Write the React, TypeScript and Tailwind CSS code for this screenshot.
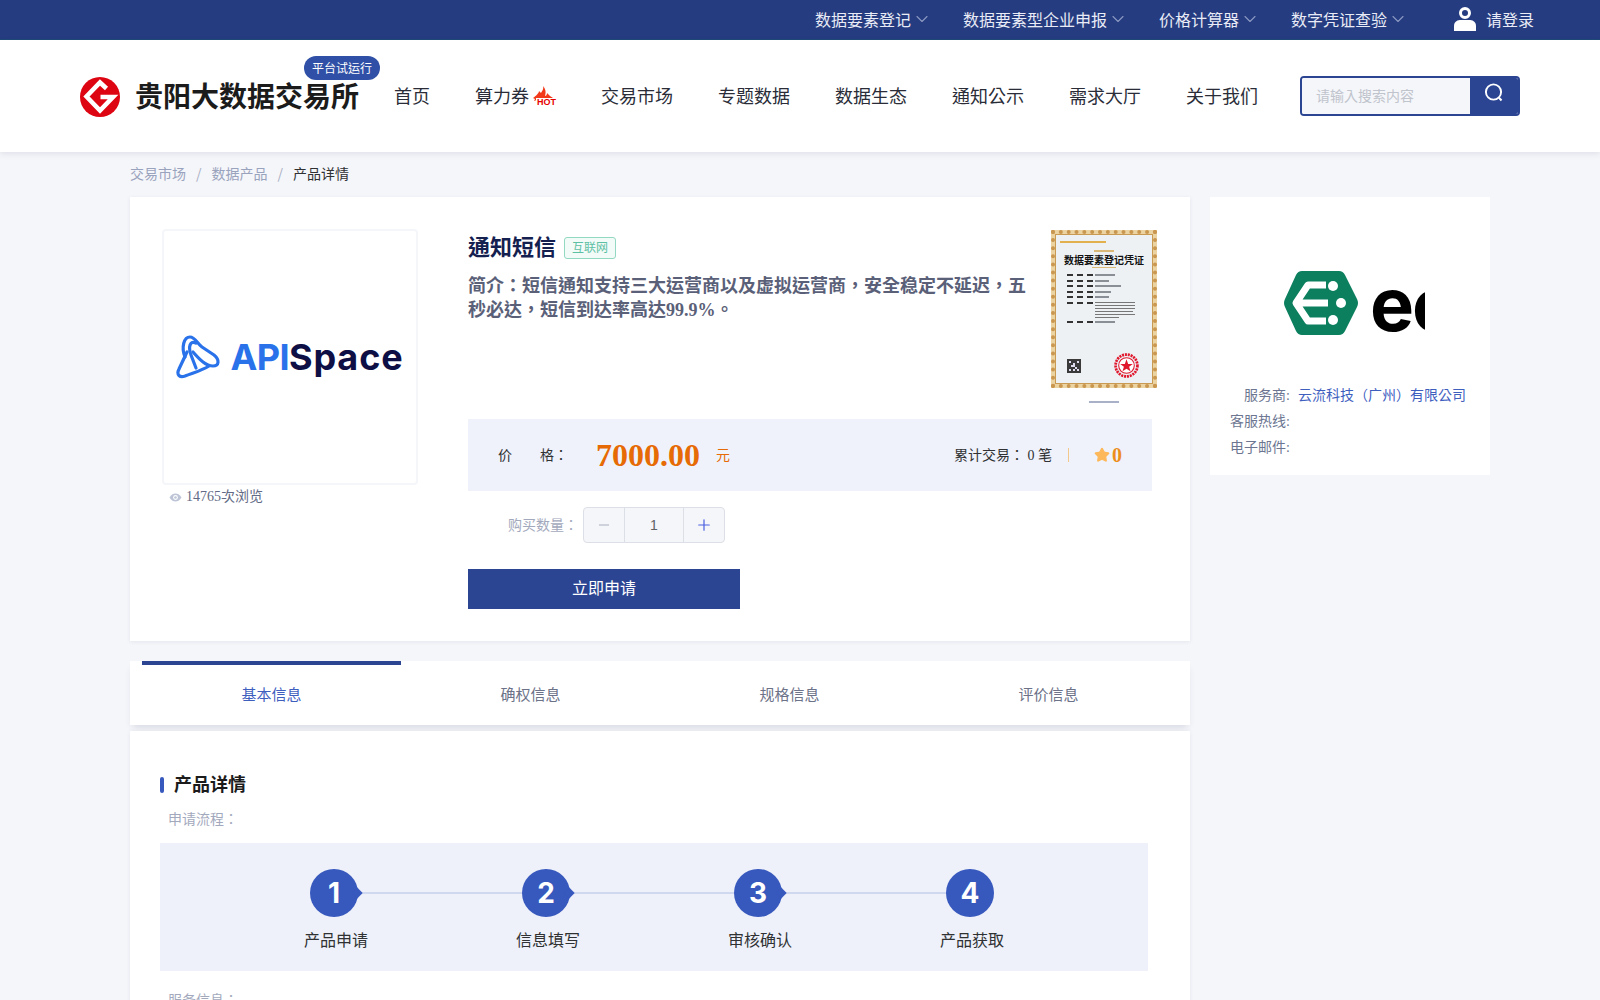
import React from "react";
import { ChevronDown, Star, Minus, Plus } from "lucide-react";

const topLinks = ["数据要素登记", "数据要素型企业申报", "价格计算器", "数字凭证查验"];
const navLinks = ["首页", "算力券", "交易市场", "专题数据", "数据生态", "通知公示", "需求大厅", "关于我们"];
const tabs = ["基本信息", "确权信息", "规格信息", "评价信息"];
const steps = ["产品申请", "信息填写", "审核确认", "产品获取"];

function Logo() {
  return (
    <svg width="40" height="40" viewBox="0 0 40 40" className="shrink-0 translate-y-[2px]">
      <circle cx="20" cy="20" r="20" fill="#de0512" />
      <path d="M26.5 11.5 L20 5.5 L6.5 19.5 L20 33.5 L33 20 L20.5 20" fill="none" stroke="#fff" strokeWidth="4.6" />
    </svg>
  );
}

function HotIcon() {
  return (
    <span className="relative ml-[3px] inline-block h-[24px] w-[24px] shrink-0">
      <svg width="24" height="24" viewBox="0 0 24 24" className="absolute left-0 top-0">
        <path d="M11 3 C12 6 10 8 9 10 L7 8 C7 10 4 13 1 15 L3 16 L2 18 L5 17 L21 15 C19 14 17 12 15 10 C15 12 14 13 13 13 C14 10 14 6 11 3 Z" fill="#f2391a" />
      </svg>
      <span className="absolute left-[4px] top-[15px] h-[9px] bg-white px-[1px] font-['Liberation_Sans',sans-serif] text-[9px] font-bold leading-[9px] text-[#e60000]">HOT</span>
    </span>
  );
}

function UserIcon() {
  return (
    <svg width="22" height="24" viewBox="0 0 22 24" className="shrink-0">
      <circle cx="11" cy="6" r="4.5" fill="none" stroke="#fff" strokeWidth="3" />
      <path d="M0 24 L0 19 C0 14 4 13 7 13 L15 13 C18 13 22 14 22 19 L22 24 Z" fill="#fff" />
    </svg>
  );
}

function SearchIcon() {
  return (
    <svg width="20" height="20" viewBox="0 0 20 20" className="shrink-0">
      <circle cx="9.5" cy="9" r="7.6" fill="none" stroke="#fff" strokeWidth="1.9" />
      <path d="M15 14.8 L17.5 17.5" fill="none" stroke="#fff" strokeWidth="2" />
    </svg>
  );
}

function EyeIcon() {
  return (
    <svg width="13" height="9" viewBox="0 0 13 9" className="shrink-0">
      <path d="M0.5 4.5 C2.5 1.2 4.5 0.5 6.5 0.5 C8.5 0.5 10.5 1.2 12.5 4.5 C10.5 7.8 8.5 8.5 6.5 8.5 C4.5 8.5 2.5 7.8 0.5 4.5 Z" fill="#bcc4d6" />
      <circle cx="6.5" cy="4.5" r="2.4" fill="#fff" />
      <circle cx="6.5" cy="4.5" r="1.3" fill="#bcc4d6" />
    </svg>
  );
}

function ApiSpaceLogo() {
  return (
    <div className="flex items-center">
      <svg width="46" height="44" viewBox="0 0 46 44" className="shrink-0">
        <g fill="none" stroke="#2a72ea" strokeWidth="3.2" strokeLinecap="round" strokeLinejoin="round">
          <path d="M9 22 C5 12 8 2 14 2 C19 2 21 8 26 12 L38 20 C44 25 43 31 37 31 C30 31 24 25 17 17" />
          <path d="M11 17 L3 34 C0 40 4 43 9 41 C16 38 25 36 33 31" />
          <path d="M20 8 C14 5 12 12 15 20 L20 33" />
        </g>
      </svg>
      <span className="ml-[8px] font-['Inter',sans-serif] text-[36px] font-bold leading-[44px] tracking-[-0.6px] text-[#2a72ea]">API</span>
      <span className="font-['Inter',sans-serif] text-[36px] font-bold leading-[44px] tracking-[0.9px] text-[#0d0f45]">Space</span>
    </div>
  );
}

function GreenLogo() {
  return (
    <div className="ml-[74px] flex h-[80px] w-[141px] items-start overflow-hidden">
      <svg width="74" height="68" viewBox="0 0 74 68" className="mt-[7px] shrink-0">
        <path d="M18 2 L55 2 Q59 2 61 6 L73 30 Q75 34 73 38 L61 62 Q59 66 55 66 L18 66 Q14 66 12 62 L1 38 Q-1 34 1 30 L12 6 Q14 2 18 2 Z" fill="#0b7f5e" />
        <path d="M42 16 L24 16 L12 34 L24 52 L42 52 M12 34 L44 34" fill="none" stroke="#fff" strokeWidth="7" strokeLinejoin="round" />
        <circle cx="49" cy="17" r="5" fill="#fff" />
        <circle cx="57" cy="34" r="5" fill="#fff" />
        <circle cx="49" cy="51" r="5" fill="#fff" />
      </svg>
      <span className="ml-[12px] mt-[2px] font-['Inter',sans-serif] text-[74px] font-bold leading-[80px] tracking-[-2px] text-black">ec</span>
    </div>
  );
}

function Certificate() {
  const rows = [20, 14, 26, 16, 14];
  return (
    <div className="h-[158px] w-[106px] shrink-0 border-[4px] border-dotted border-[#c9974f] bg-[#ecd3a2]">
      <div className="flex h-full flex-col border border-[#c99a52] bg-[#edf1f4] pl-[4px] pr-[4px] pt-[6px]">
        <div className="h-[2px] w-[46px] bg-[#e3b04f]" />
        <div className="mx-auto mt-[7px] h-[2px] w-[20px] bg-[#d9b878]" />
        <div className="mt-[2px] whitespace-nowrap text-center font-['Noto_Sans_CJK_TC',sans-serif] text-[10px] font-bold leading-[12px] text-[#111]">数据要素登记凭证</div>
        <div className="mx-auto mt-[1px] h-[1px] w-[24px] bg-[#d9b878]" />
        <div className="ml-[7px] mt-[6px] flex flex-col gap-[3.5px]">
          {rows.map((w, i) => (
            <div key={i} className="flex gap-[2px]">
              <div className="h-[2px] w-[26px] border-t-2 border-dashed border-[#333]" />
              <div className="h-[2px] bg-[#8a8f95]" style={{ width: w }} />
            </div>
          ))}
          <div className="flex gap-[2px]">
            <div className="h-[2px] w-[26px] border-t-2 border-dashed border-[#333]" />
            <div className="flex flex-col gap-[2px]">
              {[40, 40, 40, 38, 40, 24].map((w, i) => (
                <div key={i} className="h-[1px] bg-[#777]" style={{ width: w }} />
              ))}
            </div>
          </div>
          <div className="flex gap-[2px]">
            <div className="h-[2px] w-[26px] border-t-2 border-dashed border-[#333]" />
            <div className="h-[2px] w-[20px] bg-[#8a8f95]" />
          </div>
        </div>
        <div className="mt-auto flex items-end justify-between pb-[5px] pl-[7px] pr-[9px]">
          <svg width="14" height="15" viewBox="0 0 7 7" shapeRendering="crispEdges" className="mb-[5px] shrink-0">
            <rect width="7" height="7" fill="#3a3a3a" />
            <path d="M1 1h1v1H1zM5 1h1v1H5zM1 5h1v1H1zM3 2h1v1H3zM4 4h1v1H4zM3 3h1v1H3zM5 5h1v1H5zM2 3h1v1H2zM3 5h1v1H3z" fill="#dde" />
          </svg>
          <svg width="25" height="25" viewBox="0 0 24 24" className="shrink-0">
            <circle cx="12" cy="12" r="10.5" fill="none" stroke="#e0182d" strokeWidth="2.6" strokeDasharray="2 0.8" />
            <circle cx="12" cy="12" r="7.5" fill="#fff" stroke="#e0182d" strokeWidth="1" />
            <path d="M12 6 L13.6 10.5 L18 10.5 L14.5 13.2 L15.8 17.5 L12 15 L8.2 17.5 L9.5 13.2 L6 10.5 L10.4 10.5 Z" fill="#e0182d" />
          </svg>
        </div>
      </div>
    </div>
  );
}

export default function App() {
  return (
    <div className="h-screen overflow-hidden bg-[#f5f6fa] font-['Liberation_Serif','Noto_Sans_CJK_TC',serif]">
      <div className="flex h-[40px] items-center border-b border-[#1f4a78] bg-[#263c80] pb-[2px] pr-[66px] font-['Noto_Sans_CJK_TC',sans-serif]">
        <div className="ml-auto flex items-center">
          {topLinks.map((t, i) => (
            <div key={t} className={`flex items-center text-[16px] leading-[24px] text-[#e9ecf6] ${i === 0 ? "" : "ml-[31px]"}`}>
              <span>{t}</span>
              <ChevronDown className="ml-px h-[20px] w-[20px] text-[#8b99c0]" strokeWidth={1.3} />
            </div>
          ))}
          <div className="ml-[46px] flex items-center text-[16px] leading-[24px] text-[#e9ecf6]">
            <UserIcon />
            <span className="ml-[10px]">请登录</span>
          </div>
        </div>
      </div>

      <div className="relative z-10 flex h-[112px] items-center bg-white pb-[2px] pl-[80px] font-['Noto_Sans_CJK_TC',sans-serif] shadow-[0_2px_6px_rgba(40,50,90,0.1)]">
        <Logo />
        <div className="relative ml-[15px] shrink-0">
          <span className="text-[28px] font-bold leading-[40px] text-[#1b1b1b]">贵阳大数据交易所</span>
          <span className="absolute left-[169px] top-[-19px] flex h-[24px] w-[76px] items-center justify-center rounded-[12px] bg-[#2f50a6] text-[12px] text-white">平台试运行</span>
        </div>
        <nav className="ml-[35px] flex items-center gap-[45px] text-[18px] leading-[28px] text-[#2a2d38]">
          {navLinks.map((n) =>
            n === "算力券" ? (
              <span key={n} className="flex items-center">
                {n}
                <HotIcon />
              </span>
            ) : (
              <span key={n}>{n}</span>
            )
          )}
        </nav>
        <div className="ml-[42px] mt-[2px] flex h-[40px] w-[220px] overflow-hidden rounded-[4px] border-2 border-[#2b4593]">
          <div className="flex flex-1 items-center bg-[#f5f6fa] pb-[2px] pl-[14px] text-[14px] text-[#c0c4cc]">请输入搜索内容</div>
          <div className="flex w-[48px] items-center justify-center bg-[#2b4593] pb-[6px]">
            <SearchIcon />
          </div>
        </div>
      </div>

      <div className="flex h-[45px] items-center pb-[2px] pl-[130px] font-['Noto_Sans_CJK_TC',sans-serif] text-[14px] text-[#9aa3bd]">
        <span>交易市场</span>
        <span className="mx-[10px] text-[#aab0c4]">/</span>
        <span>数据产品</span>
        <span className="mx-[10px] text-[#aab0c4]">/</span>
        <span className="text-[#303133]">产品详情</span>
      </div>

      <div className="flex items-start gap-[20px] pl-[130px]">
        <div className="w-[1060px] shrink-0">
          <div className="flex h-[444px] bg-white px-[32px] pt-[32px] shadow-[0_1px_4px_rgba(40,50,90,0.08)]">
            <div className="w-[256px] shrink-0">
              <div className="flex h-[256px] items-center justify-center rounded-[4px] border-2 border-[#f5f6fa]">
                <ApiSpaceLogo />
              </div>
              <div className="ml-[7px] mt-[1px] flex items-center text-[14px] leading-[22px] text-[#626a85]">
                <EyeIcon />
                <span className="ml-[4px]">14765次浏览</span>
              </div>
            </div>
            <div className="ml-[50px] w-[684px] shrink-0">
              <div className="flex h-[190px] items-start">
                <div className="w-[583px] shrink-0">
                  <div className="mt-[1px] flex h-[36px] items-center">
                    <span className="text-[22px] font-bold leading-[36px] text-[#14204f]">通知短信</span>
                    <span className="ml-[8px] flex h-[22px] w-[52px] items-center justify-center rounded-[3px] border border-[#93d8c3] bg-[#f3fbf8] text-[12px] text-[#5cc0a3]">互联网</span>
                  </div>
                  <p className="mt-[8px] w-[560px] text-[18px] font-bold leading-[24px] text-[#5a6078]">简介：短信通知支持三大运营商以及虚拟运营商，安全稳定不延迟，五秒必达，短信到达率高达99.9%。</p>
                </div>
                <div className="flex shrink-0 flex-col items-center pt-px">
                  <Certificate />
                  <div className="mt-[13px] h-[2px] w-[30px] bg-[#a9b1c9]" />
                </div>
              </div>
              <div className="flex h-[72px] items-center bg-[#eff2fb] pl-[30px] pr-[30px] text-[14px] text-[#303133]">
                <span>价</span>
                <span className="ml-[28px]">格：</span>
                <span className="ml-[28px] text-[32px] font-bold leading-[40px] text-[#e66a05]">7000.00</span>
                <span className="ml-[16px] text-[#e66a05]">元</span>
                <span className="ml-auto">累计交易： 0 笔</span>
                <span className="ml-[16px] h-[14px] w-px bg-[#f2c98a]" />
                <Star className="ml-[25px] h-[16px] w-[16px] fill-[#fdb85c] text-[#fdb85c]" />
                <span className="ml-[2px] text-[20px] font-bold leading-[24px] text-[#ec8e1c]">0</span>
              </div>
              <div className="mt-[16px] flex h-[36px] items-center pl-[40px]">
                <span className="w-[75px] text-[14px] text-[#a3a9bd]">购买数量：</span>
                <div className="flex h-[36px] w-[142px] items-center rounded-[4px] border border-[#dcdfe6] bg-[#f5f6fa]">
                  <span className="flex h-full w-[41px] items-center justify-center border-r border-[#dcdfe6]">
                    <Minus className="h-[16px] w-[16px] text-[#a8adbd]" strokeWidth={1.5} />
                  </span>
                  <span className="flex-1 text-center font-['Liberation_Sans',sans-serif] text-[14px] text-[#606266]">1</span>
                  <span className="flex h-full w-[41px] items-center justify-center border-l border-[#dcdfe6]">
                    <Plus className="h-[18px] w-[18px] text-[#4a60e0]" strokeWidth={1.6} />
                  </span>
                </div>
              </div>
              <div className="mt-[26px] flex h-[40px] w-[272px] items-center justify-center bg-[#2b4593] text-[16px] text-white">立即申请</div>
            </div>
          </div>

          <div className="mt-[20px] flex h-[64px] bg-white pl-[12px] shadow-[0_5px_8px_-3px_rgba(40,50,90,0.16)]">
            {tabs.map((t, i) => (
              <div key={t} className={`flex w-[259px] items-center justify-center border-t-4 text-[15px] ${i === 0 ? "border-[#2b4593] text-[#3f5fbf]" : "border-transparent text-[#6c7288]"}`}>{t}</div>
            ))}
          </div>

          <div className="mt-[6px] h-[400px] bg-white pl-[30px] pt-[42px] shadow-[0_1px_4px_rgba(40,50,90,0.08)]">
            <div className="flex h-[24px] items-center">
              <span className="h-[16px] w-[4px] rounded-[2px] bg-[#3758bd]" />
              <span className="ml-[10px] text-[18px] font-bold leading-[24px] text-[#1b1b1b]">产品详情</span>
            </div>
            <div className="mt-[13px] pl-[8px] text-[14px] leading-[20px] text-[#a3a9bd]">申请流程：</div>
            <div className="mt-[13px] flex h-[128px] w-[988px] items-start bg-[#eef1fa] pl-[150px] pt-[26px]">
              {steps.map((s, i) => (
                <div key={s} className="flex w-[212px] shrink-0 flex-col">
                  <div className="flex items-center">
                    <span className="relative flex h-[48px] w-[48px] shrink-0 items-center justify-center rounded-full bg-[#3758bd] font-['Inter',sans-serif] text-[28px] font-bold leading-[32px] text-white">
                      {i + 1}
                      {i < 3 && <span className="absolute right-[-3px] top-[20px] h-[8px] w-[8px] rotate-45 bg-[#3758bd]" />}
                    </span>
                    {i < 3 && <span className="h-[2px] flex-1 bg-[#d0d8f0]" />}
                  </div>
                  <span className="ml-[-6px] mt-[10px] w-[64px] whitespace-nowrap font-['Noto_Sans_CJK_TC',sans-serif] text-[16px] leading-[24px] text-[#303133]">{s}</span>
                </div>
              ))}
            </div>
            <div className="mt-[20px] pl-[8px] text-[14px] leading-[20px] text-[#a3a9bd]">服务信息：</div>
          </div>
        </div>

        <div className="h-[278px] w-[280px] shrink-0 bg-white pt-[65px]">
          <GreenLogo />
          <div className="mt-[41px] flex flex-col text-[14px] leading-[26px]">
            <div className="flex">
              <span className="w-[80px] text-right text-[#6c7691]">服务商:</span>
              <span className="ml-[8px] whitespace-nowrap text-[#3f5fbf]">云流科技（广州）有限公司</span>
            </div>
            <div className="w-[80px] text-right text-[#6c7691]">客服热线:</div>
            <div className="w-[80px] text-right text-[#6c7691]">电子邮件:</div>
          </div>
        </div>
      </div>
    </div>
  );
}
